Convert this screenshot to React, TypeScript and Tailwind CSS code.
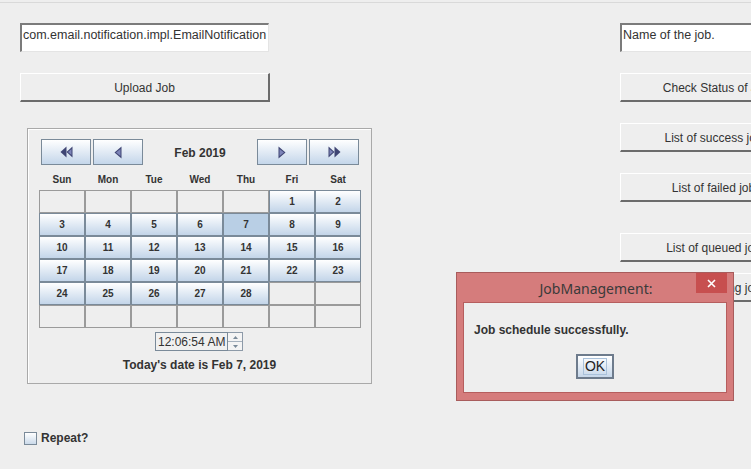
import React from "react";

const Tri = ({ dir }: { dir: "l" | "r" | "ll" | "rr" }) => {
  const fill = "#3f4573";
  if (dir === "l")
    return (
      <svg width="8" height="13" viewBox="0 0 8 13">
        <polygon points="7.5,0.5 0.5,6.5 7.5,12.5" fill={fill} />
        <polygon points="6.5,3 2,6.5 6.5,10" fill="#7d84b8" />
      </svg>
    );
  if (dir === "r")
    return (
      <svg width="8" height="13" viewBox="0 0 8 13">
        <polygon points="0.5,0.5 7.5,6.5 0.5,12.5" fill={fill} />
        <polygon points="1.5,3 6,6.5 1.5,10" fill="#7d84b8" />
      </svg>
    );
  if (dir === "ll")
    return (
      <svg width="13" height="12" viewBox="0 0 13 12">
        <polygon points="6.5,0.5 0.5,6 6.5,11.5" fill={fill} />
        <polygon points="12.5,0.5 6.5,6 12.5,11.5" fill={fill} />
        <polygon points="11.5,3 8,6 11.5,9" fill="#7d84b8" />
      </svg>
    );
  return (
    <svg width="13" height="12" viewBox="0 0 13 12">
      <polygon points="0.5,0.5 6.5,6 0.5,11.5" fill={fill} />
      <polygon points="6.5,0.5 12.5,6 6.5,11.5" fill={fill} />
      <polygon points="1.5,3 5,6 1.5,9" fill="#7d84b8" />
    </svg>
  );
};

const NavBtn = ({ dir }: { dir: "l" | "r" | "ll" | "rr" }) => (
  <div className="w-[50px] h-[26px] border border-[#7a8a99] bg-gradient-to-b from-[#ffffff] to-[#c4d6ea] flex items-center justify-center shrink-0">
    <Tri dir={dir} />
  </div>
);

const JButton = ({ label }: { label: string }) => (
  <div className="h-[29px] w-full border-t border-l border-t-white border-l-white border-b-2 border-r-2 border-b-[#6b6b6b] border-r-[#6b6b6b] bg-[#eeeeee] flex items-center justify-center pt-[1px] text-[12px] text-[#333333] whitespace-nowrap overflow-hidden">
    {label}
  </div>
);

const JField = ({ text }: { text: string }) => (
  <div className="h-[29px] w-full bg-white border-t-2 border-l-2 border-t-[#7b7b7b] border-l-[#7b7b7b] border-r border-b border-r-[#e4e4e4] border-b-[#e4e4e4] pl-[1px] pt-[3px] text-[12.5px] text-[#333333] leading-[14px] whitespace-nowrap overflow-hidden">
    {text}
  </div>
);

const cells: (number | null)[] = [
  null, null, null, null, null, 1, 2,
  3, 4, 5, 6, 7, 8, 9,
  10, 11, 12, 13, 14, 15, 16,
  17, 18, 19, 20, 21, 22, 23,
  24, 25, 26, 27, 28, null, null,
  null, null, null, null, null, null, null,
];

const days = ["Sun", "Mon", "Tue", "Wed", "Thu", "Fri", "Sat"];

export default function App() {
  return (
    <div className="w-[751px] h-[469px] bg-[#eeeeee] overflow-hidden relative font-['Liberation_Sans',Arial,sans-serif] text-[#333333]">
      <div className="h-[2px]" />
      <div className="h-px bg-[#d9d9d9]" />
      <div className="flex pl-[20px] pt-[20px]">
        {/* Left column */}
        <div className="w-[250px] shrink-0 flex flex-col">
          <div className="w-[249px]">
            <JField text="com.email.notification.impl.EmailNotification" />
          </div>
          <div className="mt-[21px]">
            <JButton label="Upload Job" />
          </div>
          {/* Calendar panel */}
          <div className="mt-[26px] ml-[7px] w-[345px] h-[256px] shrink-0 border border-[#a9a9a9] shadow-[inset_1px_1px_0_#ffffff] flex flex-col">
            <div className="flex items-center pl-[13px] pt-[10px]">
              <NavBtn dir="ll" />
              <div className="ml-[2px]">
                <NavBtn dir="l" />
              </div>
              <div className="w-[114px] text-center font-bold text-[12px] pt-[1px]">Feb 2019</div>
              <NavBtn dir="r" />
              <div className="ml-[2px]">
                <NavBtn dir="rr" />
              </div>
            </div>
            <div className="flex pl-[11px] mt-[7px] h-[14px] items-center">
              {days.map((d) => (
                <div key={d} className="w-[46px] text-center font-bold text-[10px]">
                  {d}
                </div>
              ))}
            </div>
            <div className="ml-[11px] mt-[4px] grid grid-cols-[repeat(7,46px)] grid-rows-[repeat(6,23px)] w-[322px]">
              {cells.map((c, i) =>
                c === null ? (
                  <div key={i} className="border border-[#9a9a9a] bg-[#eeeeee]" />
                ) : c === 7 ? (
                  <div key={i} className="border border-[#7a8a99] bg-[#b9cfe5] flex items-center justify-center font-bold text-[10px]">
                    {c}
                  </div>
                ) : (
                  <div key={i} className="border border-[#7a8a99] bg-gradient-to-b from-[#ffffff] to-[#c3d5e9] flex items-center justify-center font-bold text-[10px]">
                    {c}
                  </div>
                )
              )}
            </div>
            <div className="flex justify-center mt-[4px] pr-[1px]">
              <div className="flex h-[19px]">
                <div className="w-[73px] border border-[#7a8a99] bg-[#f0f0f0] flex items-center pl-[2px] text-[12px] leading-none">
                  12:06:54 AM
                </div>
                <div className="w-[15px] flex flex-col border border-l-0 border-[#8d9aa8]">
                  <div className="flex-1 flex items-center justify-center border-b border-[#a6b1bd] bg-[#f4f4f4]">
                    <svg width="5" height="3" viewBox="0 0 5 3">
                      <polygon points="0,3 2.5,0 5,3" fill="#7a8a99" />
                    </svg>
                  </div>
                  <div className="flex-1 flex items-center justify-center bg-[#f4f4f4]">
                    <svg width="5" height="3" viewBox="0 0 5 3">
                      <polygon points="0,0 2.5,3 5,0" fill="#7a8a99" />
                    </svg>
                  </div>
                </div>
              </div>
            </div>
            <div className="mt-[7px] text-center font-bold text-[12px] leading-[14px]">
              Today's date is Feb 7, 2019
            </div>
          </div>
          {/* Checkbox */}
          <div className="mt-[47px] ml-[4px] flex items-center gap-[4px]">
            <div className="w-[13px] h-[13px] border border-[#7a8a99] bg-gradient-to-b from-[#ffffff] to-[#cbdaea]" />
            <span className="font-bold text-[12px] leading-[14px]">Repeat?</span>
          </div>
        </div>
        {/* Right column */}
        <div className="ml-[350px] w-[194px] shrink-0 flex flex-col">
          <JField text="Name of the job." />
          <div className="mt-[21px]">
            <JButton label="Check Status of Job" />
          </div>
          <div className="mt-[21px]">
            <JButton label="List of success jobs" />
          </div>
          <div className="mt-[21px]">
            <JButton label="List of failed jobs" />
          </div>
          <div className="mt-[31px]">
            <JButton label="List of queued jobs" />
          </div>
          <div className="mt-[11px]">
            <JButton label="List of running jobs" />
          </div>
        </div>
      </div>

      {/* Dialog overlay */}
      <div className="absolute left-[456px] top-[272px] w-[278px] h-[129px] bg-[#d57c7c] border border-[#a85c5c] flex flex-col">
        <div className="relative h-[29px] shrink-0 flex items-center justify-center">
          <span className="font-['Noto_Sans','Liberation_Sans',sans-serif] text-[14px] text-[#3a3a3a] pl-[2px] pt-[1px]">
            JobManagement:
          </span>
          <div className="absolute right-[6px] top-0 w-[31px] h-[20px] bg-[#c74f4f] flex items-center justify-center">
            <svg width="9" height="9" viewBox="0 0 9 9">
              <path d="M1 1 L8 8 M8 1 L1 8" stroke="#ffffff" strokeWidth="1.6" />
            </svg>
          </div>
        </div>
        <div className="mx-[6px] mb-[7px] flex-1 bg-[#eeeeee] border border-[#b65e5e] flex flex-col">
          <div className="pl-[10px] pt-[20px] font-bold text-[12px] leading-[14px]">
            Job schedule successfully.
          </div>
          <div className="flex justify-center mt-[17px]">
            <div className="w-[38px] h-[25px] border-2 border-[#6d7b8c] bg-gradient-to-b from-[#ffffff] to-[#c6d7ea] flex items-center justify-center">
              <span className="border border-[#a9c1da] px-[1px] text-[14px] leading-[15px] text-[#222]">OK</span>
            </div>
          </div>
        </div>
      </div>
    </div>
  );
}
